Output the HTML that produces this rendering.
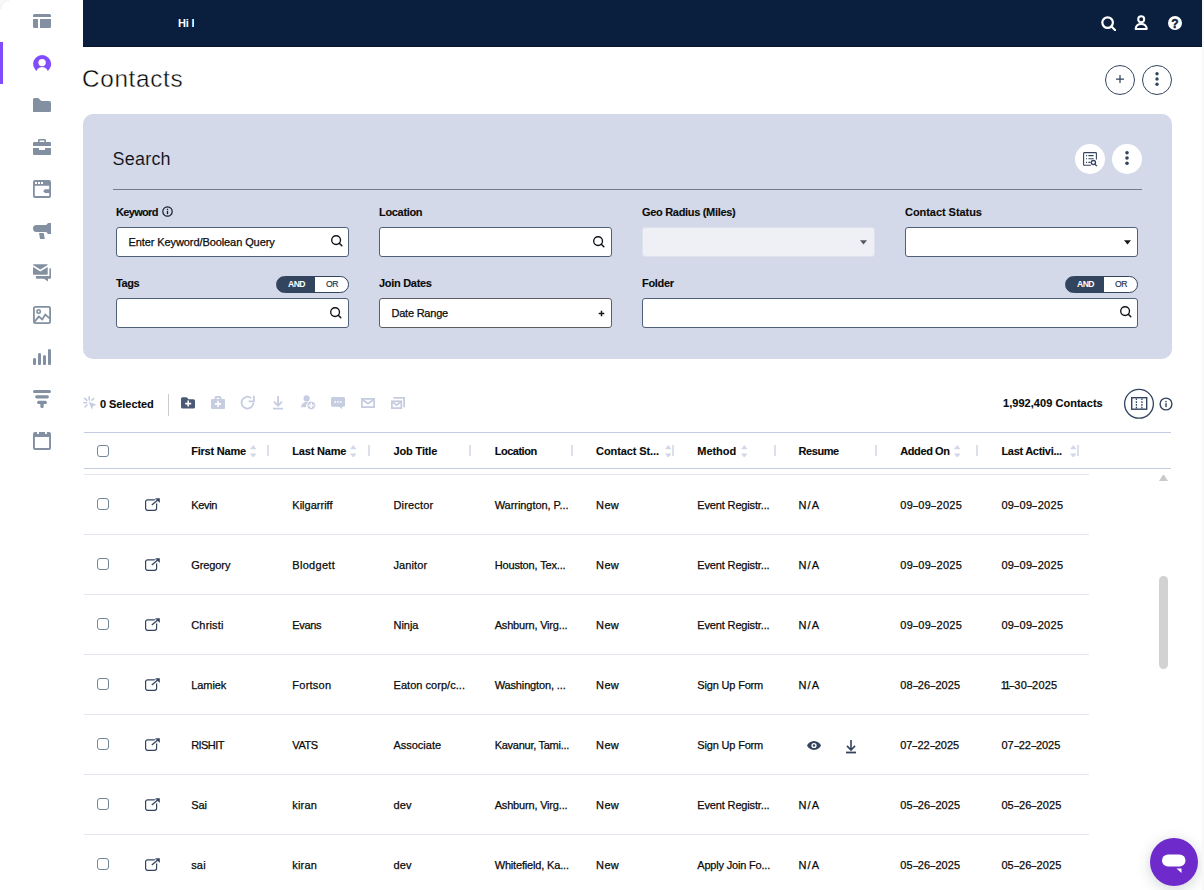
<!DOCTYPE html>
<html lang="en"><head><meta charset="utf-8"><title>Contacts</title>
<style>
html,body{margin:0;padding:0}
body{width:1204px;height:890px;overflow:hidden;background:#f8f8f8;font-family:"Liberation Sans",sans-serif;color:#0c0c0c;position:relative}
.ab{position:absolute}
#page{position:absolute;left:0;top:0;width:1202px;height:890px;background:#fff;border-top-left-radius:9px;overflow:hidden}
#topbar{position:absolute;left:83px;top:0;width:1119px;height:46px;background:#0a1e3d;border-bottom:1px solid #06142c;box-sizing:content-box}
.t{position:absolute;white-space:nowrap;line-height:14px;font-size:11px;color:#0b0b0b;-webkit-text-stroke:0.25px #0b0b0b}
.hy{display:inline-block;transform:scaleX(1.7)}
.b{font-weight:700;-webkit-text-stroke:0.12px}
.inp{position:absolute;box-sizing:border-box;height:30px;background:#fff;border:1px solid #4f6079;border-radius:3px}
.lbl{position:absolute;white-space:nowrap;line-height:14px;font-size:11px;font-weight:700;color:#0b0b0b;-webkit-text-stroke:0.12px #0b0b0b}
.tog{position:absolute;box-sizing:border-box;width:73px;height:17px;border:1px solid #33445f;border-radius:9px;background:linear-gradient(to right,#33445f 0,#33445f 39px,#fff 39px,#fff 100%);background-origin:border-box}
.tog span{position:absolute;top:0.4px;line-height:15px;font-size:8.6px;font-weight:700;letter-spacing:-0.55px}
.cb{position:absolute;box-sizing:border-box;width:12px;height:12px;border:1px solid #728599;border-radius:3px;background:#fff}
.hl{position:absolute;height:1px}
.sep{position:absolute;width:2px;height:11px;top:445px;background:#dce0ec}
.circ{position:absolute;box-sizing:border-box;width:30px;height:30px;border-radius:50%}
</style></head><body><div id="page">

<div class="ab" style="left:0;top:0;width:9px;height:9px;box-sizing:border-box;border-top-left-radius:9px;border-left:1px solid #ececec;border-top:1px solid #ececec"></div>
<div class="ab" style="left:0;top:42px;width:3px;height:42px;background:#814cff"></div>
<svg class="ab" style="left:33px;top:14px" width="18" height="14" viewBox="0 0 18 14" ><path fill="#8290a2" d="M1.5 0h15A1.5 1.5 0 0 1 18 1.5V3H0V1.5A1.5 1.5 0 0 1 1.5 0zM0 5h5v9H1.5A1.5 1.5 0 0 1 0 12.5zM7 5h11v7.5a1.5 1.5 0 0 1-1.5 1.5H7z"/></svg>
<svg class="ab" style="left:33px;top:54.9px" width="18.2" height="18" viewBox="0 0 18.2 18" ><defs><mask id="um"><rect width="18.2" height="18" fill="#000"/><circle cx="9.1" cy="9" r="9" fill="#fff"/><circle cx="9.1" cy="7.6" r="3.7" fill="#000"/><circle cx="9.1" cy="18.1" r="6.1" fill="#000"/><rect x="0" y="16.3" width="18.2" height="2" fill="#000"/></mask></defs><rect width="18.2" height="18" fill="#814cff" mask="url(#um)"/></svg>
<svg class="ab" style="left:33px;top:98px" width="18" height="14" viewBox="0 0 18 14" ><path fill="#8290a2" d="M0 14V1.5Q0 0 1.5 0H5.3L8.3 3H16Q18 3 18 5V12.5Q18 14 16.5 14z"/></svg>
<svg class="ab" style="left:33px;top:139px" width="18" height="16" viewBox="0 0 18 16" ><path fill="#8290a2" fill-rule="evenodd" d="M6.2 0h5.6a1.2 1.2 0 0 1 1.2 1.2V3h4a1 1 0 0 1 1 1v2.9H0V4a1 1 0 0 1 1-1h4V1.2A1.2 1.2 0 0 1 6.2 0zM6.6 1.6V3h4.8V1.6zM0 9h6v2h6V9h6v6a1 1 0 0 1-1 1H1a1 1 0 0 1-1-1z"/></svg>
<svg class="ab" style="left:33px;top:180px" width="18" height="18" viewBox="0 0 18 18" ><path fill="#8290a2" fill-rule="evenodd" d="M2 0h14a2 2 0 0 1 2 2v14a2 2 0 0 1-2 2H2a2 2 0 0 1-2-2V2a2 2 0 0 1 2-2zM1.8 5.8V16.1h14.4V13H12l-1.9-1.9L12 9.2h4.2V5.8zM2 2v2h2V2zm3 0v2h2V2zm3 0v2h2V2z"/></svg>
<svg class="ab" style="left:33px;top:223px" width="18" height="16" viewBox="0 0 18 16" ><path fill="#8290a2" d="M3.5 2H13.3L15 0h3v11h-3l-1.7-2H3.5a3.5 3.5 0 0 1 0-7zM6.1 10h4.6l1.2 6H7z"/></svg>
<svg class="ab" style="left:33px;top:264px" width="18" height="18" viewBox="0 0 18 18" ><path fill="#8290a2" d="M.6.2H14.1a.6.6 0 0 1 .6.6V1L7.35 5.6 0 1V.8A.6.6 0 0 1 .6.2zM0 2.9L7.35 7.5 14.7 2.9V10a.7.7 0 0 1-.7.7H.7A.7.7 0 0 1 0 10zM16.4 4.3H17a1 1 0 0 1 1 1v8.4a1 1 0 0 1-1 1h-2v2.8l-4-2.8H3.9a1 1 0 0 1-1-1V12h13.5z"/></svg>
<svg class="ab" style="left:33px;top:306px" width="18" height="18" viewBox="0 0 18 18" ><g fill="none" stroke="#8290a2"><rect x="0.9" y="0.9" width="16.2" height="16.2" rx="1.6" stroke-width="1.8"/><circle cx="5.6" cy="5.5" r="1.7" stroke-width="1.6"/><path d="M1.4 15.9L5.8 10.6 9.3 13.4 12.2 8.6 17 12.6" stroke-width="1.8" stroke-linejoin="miter"/></g></svg>
<svg class="ab" style="left:33px;top:349px" width="18" height="16.2" viewBox="0 0 18 16.2" ><g fill="#8290a2"><rect x="0" y="9" width="3" height="7.2" rx="1.5"/><rect x="5" y="4" width="3" height="12.2" rx="1.5"/><rect x="10" y="6" width="3" height="10.2" rx="1.5"/><rect x="15" y="0" width="3" height="16.2" rx="1.5"/></g></svg>
<svg class="ab" style="left:33px;top:390px" width="18" height="18" viewBox="0 0 18 18" ><g fill="#8290a2"><rect x="0" y="0" width="18" height="3.1" rx="1.5"/><rect x="2.1" y="5.2" width="13.8" height="3.2" rx="1.6"/><rect x="4.1" y="10.8" width="9.8" height="3.1" rx="1.5"/><rect x="7.35" y="11" width="3.3" height="6.9" rx="1.5"/></g></svg>
<svg class="ab" style="left:33px;top:432px" width="18" height="18" viewBox="0 0 18 18" ><path fill="#8290a2" fill-rule="evenodd" d="M2 0H4.1V2H6V0h6v2h1.9V0H16a2 2 0 0 1 2 2v14a2 2 0 0 1-2 2H2a2 2 0 0 1-2-2V2a2 2 0 0 1 2-2zM1.9 5v11.1h14.2V5z"/></svg>
<div id="topbar">
<div class="t b" style="left:95px;top:16px;width:16px;overflow:hidden;color:#fff;-webkit-text-stroke:0;font-size:11px;letter-spacing:-0.2px">Hi K</div>
</div>
<svg class="ab" style="left:1101px;top:16px" width="15" height="15" viewBox="0 0 15 15" ><circle cx="6.6" cy="6.6" r="5.3" fill="none" stroke="#fff" stroke-width="2.2"/><path d="M10.5 10.5l3.7 3.7" stroke="#fff" stroke-width="2.2" stroke-linecap="round"/></svg>
<svg class="ab" style="left:1134px;top:15px" width="14" height="15" viewBox="0 0 14 15" ><circle cx="7.2" cy="4.3" r="3" fill="none" stroke="#fff" stroke-width="2"/><path d="M1.6 13.9C2 10.4 4.4 9 7.2 9s5.2 1.4 5.6 4.9z" fill="none" stroke="#fff" stroke-width="2" stroke-linejoin="round"/></svg>
<div class="ab" style="left:1167.8px;top:16.3px;width:14px;height:14px;border-radius:50%;background:#fff"></div>
<div class="t b" style="left:1167.8px;top:16.8px;width:14px;text-align:center;line-height:14px;font-size:12px;color:#0a1e3d;-webkit-text-stroke:0.4px #0a1e3d">?</div>
<div class="t" style="left:82px;top:63.7px;font-size:24.3px;line-height:30px;color:#0a0a0a;-webkit-text-stroke:0.4px #fff;letter-spacing:0.67px">Contacts</div>
<div class="circ" style="left:1105px;top:65px;border:1px solid #33445f"></div>
<div class="circ" style="left:1142px;top:65px;border:1px solid #33445f"></div>
<svg class="ab" style="left:1114px;top:73.2px" width="12" height="12" viewBox="0 0 12 12" ><path d="M6 2v8M2 6h8" stroke="#33445f" stroke-width="1.25"/></svg>
<svg class="ab" style="left:1155px;top:70.9px" width="4" height="16" viewBox="0 0 4 16" ><g fill="#33445f"><circle cx="2" cy="2.7" r="1.7"/><circle cx="2" cy="8" r="1.7"/><circle cx="2" cy="13.3" r="1.7"/></g></svg>
<div class="ab" style="left:83px;top:114px;width:1089px;height:245px;background:#d3d9e8;border-radius:10px"></div>
<div class="t" style="left:112.5px;top:147px;font-size:18px;line-height:24px;color:#0c1014;-webkit-text-stroke:0.12px #d3d9e8;letter-spacing:0.22px">Search</div>
<div class="circ" style="left:1075px;top:144px;background:#fff"></div>
<div class="circ" style="left:1112px;top:144px;background:#fff"></div>
<svg class="ab" style="left:1125.3px;top:149.8px" width="4" height="16" viewBox="0 0 4 16" ><g fill="#33445f"><circle cx="2" cy="2.7" r="1.8"/><circle cx="2" cy="8" r="1.8"/><circle cx="2" cy="13.3" r="1.8"/></g></svg>
<svg class="ab" style="left:1083px;top:152px" width="15" height="15" viewBox="0 0 15 15" ><g fill="none" stroke="#33445f" stroke-width="1.1"><path d="M7.8 13.3H1.2a.6.6 0 0 1-.6-.6V1.2a.6.6 0 0 1 .6-.6h11.6a.6.6 0 0 1 .6.6V7.4"/><path d="M5.4 3.6h5.2M5.4 6.8h5.2M5.4 10.4h2"/><path d="M3 3.6h1.1M3 6.8h1.1M3 10.4h1.1"/><circle cx="10.4" cy="10.6" r="2.1" stroke-width="1.3"/><path d="M12 12.2l1.9 1.9" stroke-width="1.3"/></g></svg>
<div class="hl" style="left:113px;top:189px;width:1029px;background:#707b8c"></div>
<div class="lbl" style="left:116px;top:205px;letter-spacing:-0.68px">Keyword</div>
<svg class="ab" style="left:161.6px;top:205.8px" width="11" height="11" viewBox="0 0 11 11" ><circle cx="5.5" cy="5.5" r="4.7" fill="none" stroke="#141b26" stroke-width="1.2"/><rect x="4.85" y="4.9" width="1.3" height="3.3" fill="#141b26"/><rect x="4.85" y="2.8" width="1.3" height="1.3" fill="#141b26"/></svg>
<div class="inp" style="left:116px;top:227px;width:233px"></div>
<div class="t" style="left:128.5px;top:235px;letter-spacing:-0.09px">Enter Keyword/Boolean Query</div>
<svg class="ab" style="left:331px;top:235.2px" width="12.5" height="12.5" viewBox="0 0 12.5 12.5" ><circle cx="5.1" cy="5.1" r="4.4" fill="none" stroke="#0c1118" stroke-width="1.35"/><path d="M8.3 8.3l2.5 2.4" stroke="#0c1118" stroke-width="1.5" stroke-linecap="round"/></svg>
<div class="lbl" style="left:379px;top:205px;letter-spacing:-0.32px">Location</div>
<div class="inp" style="left:379px;top:227px;width:233px"></div>
<svg class="ab" style="left:592.7px;top:236.2px" width="12.5" height="12.5" viewBox="0 0 12.5 12.5" ><circle cx="5.1" cy="5.1" r="4.4" fill="none" stroke="#0c1118" stroke-width="1.35"/><path d="M8.3 8.3l2.5 2.4" stroke="#0c1118" stroke-width="1.5" stroke-linecap="round"/></svg>
<div class="lbl" style="left:642px;top:205px;letter-spacing:-0.31px">Geo Radius (Miles)</div>
<div class="inp" style="left:642px;top:227px;width:233px;background:#eef0f6;border-color:#dde1ec"></div>
<svg class="ab" style="left:860px;top:240px" width="7" height="5" viewBox="0 0 7 5" ><path d="M0 0.3h7L3.5 4.6z" fill="#55595f"/></svg>
<div class="lbl" style="left:905px;top:205px;letter-spacing:-0.05px">Contact Status</div>
<div class="inp" style="left:905px;top:227px;width:233px"></div>
<svg class="ab" style="left:1124px;top:240px" width="7" height="5" viewBox="0 0 7 5" ><path d="M0 0.3h7L3.5 4.6z" fill="#15191f"/></svg>
<div class="lbl" style="left:116px;top:276px;letter-spacing:-0.39px">Tags</div>
<div class="tog" style="left:276px;top:276px"><span style="left:11px;color:#fff">AND</span><span style="left:49px;color:#2a3850;font-weight:400;font-size:8.6px;letter-spacing:-0.35px;-webkit-text-stroke:0.2px #2a3850">OR</span></div>
<div class="inp" style="left:116px;top:298px;width:233px"></div>
<svg class="ab" style="left:329.7px;top:307.2px" width="12.5" height="12.5" viewBox="0 0 12.5 12.5" ><circle cx="5.1" cy="5.1" r="4.4" fill="none" stroke="#0c1118" stroke-width="1.35"/><path d="M8.3 8.3l2.5 2.4" stroke="#0c1118" stroke-width="1.5" stroke-linecap="round"/></svg>
<div class="lbl" style="left:379px;top:276px;letter-spacing:-0.3px">Join Dates</div>
<div class="inp" style="left:379px;top:298px;width:233px;border-color:#5e5e5e"></div>
<div class="t" style="left:391.5px;top:306px;letter-spacing:-0.23px">Date Range</div>
<svg class="ab" style="left:598px;top:310px" width="7" height="7" viewBox="0 0 7 7" ><path d="M3.5 0.7v5.6M0.7 3.5h5.6" stroke="#15191f" stroke-width="1.5"/></svg>
<div class="lbl" style="left:642px;top:276px;letter-spacing:-0.3px">Folder</div>
<div class="tog" style="left:1065px;top:276px"><span style="left:11px;color:#fff">AND</span><span style="left:49px;color:#2a3850;font-weight:400;font-size:8.6px;letter-spacing:-0.35px;-webkit-text-stroke:0.2px #2a3850">OR</span></div>
<div class="inp" style="left:642px;top:298px;width:496px"></div>
<svg class="ab" style="left:1119.9px;top:306.2px" width="12.5" height="12.5" viewBox="0 0 12.5 12.5" ><circle cx="5.1" cy="5.1" r="4.4" fill="none" stroke="#0c1118" stroke-width="1.35"/><path d="M8.3 8.3l2.5 2.4" stroke="#0c1118" stroke-width="1.5" stroke-linecap="round"/></svg>
<svg class="ab" style="left:83px;top:396px" width="14" height="14" viewBox="0 0 14 14" ><g stroke="#c6cde1" stroke-width="1.6" stroke-linecap="round" fill="none"><path d="M6.2 0.9v3M1.8 2.4l2 2M0.9 6.8h2.8M2 11l1.9-1.9M10.6 2.4l-1.8 1.9"/></g><path d="M5.6 5.8l8 2.9-3.4 1.4-1.4 3.5z" fill="#c6cde1"/></svg>
<div class="t b" style="left:100px;top:397px;letter-spacing:-0.07px">0 Selected</div>
<div class="ab" style="left:168px;top:394px;width:1px;height:22px;background:#c9cbd0"></div>
<svg class="ab" style="left:181px;top:397px" width="14" height="12" viewBox="0 0 14 12" ><path fill="#4b5974" d="M1.5 0.2h3.6c.5 0 .9.2 1.2.6l1.1 1.5h5.1a1.5 1.5 0 0 1 1.5 1.5v6.2a1.5 1.5 0 0 1-1.5 1.5h-11A1.5 1.5 0 0 1 0 10V1.7A1.5 1.5 0 0 1 1.5.2z"/><path d="M7.2 3.6v6M4.2 6.6h6" stroke="#fff" stroke-width="1.6"/></svg>
<svg class="ab" style="left:211px;top:396px" width="14" height="13" viewBox="0 0 14 13" ><path fill="#c6cde1" d="M5.2 0h3.6c.9 0 1.6.7 1.6 1.6V3h2.6a1 1 0 0 1 1 1v8a1 1 0 0 1-1 1H1a1 1 0 0 1-1-1V4a1 1 0 0 1 1-1h2.6V1.6C3.6.7 4.3 0 5.2 0zm.5 1.7V3h2.6V1.7z"/><path d="M7 4.8v6.2M3.9 7.9h6.2" stroke="#fff" stroke-width="1.6"/></svg>
<svg class="ab" style="left:240.4px;top:395.4px" width="15" height="15" viewBox="0 0 15 15" ><path d="M13.4 7.6A5.9 5.9 0 1 1 11.3 3.1" fill="none" stroke="#c6cde1" stroke-width="1.8"/><path d="M13.9 0.8v5.5H8.6" fill="none" stroke="#c6cde1" stroke-width="1.8"/></svg>
<svg class="ab" style="left:273.2px;top:396.2px" width="10" height="14" viewBox="0 0 10 14" ><path d="M5 0v9.6M1 5.7l4 4 4-4M0 12.6h10" fill="none" stroke="#c6cde1" stroke-width="1.8"/></svg>
<svg class="ab" style="left:300.6px;top:395.3px" width="15" height="15" viewBox="0 0 15 15" ><circle cx="5.6" cy="3.4" r="3.1" fill="#c6cde1"/><path d="M0 12.3c.3-3.4 2.4-5.4 5.6-5.4.8 0 1.5.1 2.1.3A5.4 5.4 0 0 0 5 12.3z" fill="#c6cde1"/><circle cx="10.2" cy="10.4" r="4.3" fill="#c6cde1" stroke="#fff" stroke-width="0.9"/><path d="M10.2 7.7v5.4M7.5 10.4h5.4" stroke="#fff" stroke-width="1.5"/></svg>
<svg class="ab" style="left:331px;top:397px" width="14" height="13" viewBox="0 0 14 13" ><path fill="#c6cde1" d="M1.5 0h11A1.5 1.5 0 0 1 14 1.5v6.7a1.5 1.5 0 0 1-1.5 1.5H11v2.3L8.2 9.7H1.5A1.5 1.5 0 0 1 0 8.2V1.5A1.5 1.5 0 0 1 1.5 0z"/><g fill="#fff"><rect x="3.4" y="4.2" width="1.6" height="1.6"/><rect x="6.2" y="4.2" width="1.6" height="1.6"/><rect x="9" y="4.2" width="1.6" height="1.6"/></g></svg>
<svg class="ab" style="left:361px;top:398px" width="14" height="10" viewBox="0 0 14 10" ><rect x="0.9" y="0.9" width="12.2" height="8.2" fill="none" stroke="#c6cde1" stroke-width="1.8"/><path d="M1.2 1.4l5.8 4.2 5.8-4.2" fill="none" stroke="#c6cde1" stroke-width="1.8"/></svg>
<svg class="ab" style="left:391px;top:397px" width="14" height="12" viewBox="0 0 14 12" ><path d="M2.4 0.9h10.7v9.4" fill="none" stroke="#c6cde1" stroke-width="1.8"/><rect x="0.9" y="4.3" width="9.4" height="6.8" fill="none" stroke="#c6cde1" stroke-width="1.8"/><path d="M1.2 4.8l4.4 3.3 4.4-3.3" fill="none" stroke="#c6cde1" stroke-width="1.7"/></svg>
<div class="t b" style="left:1003px;top:396px;letter-spacing:0.04px">1,992,409 Contacts</div>
<svg class="ab" style="left:1123px;top:388px" width="32" height="32" viewBox="0 0 32 32" ><circle cx="16" cy="15.8" r="14.4" fill="none" stroke="#33445f" stroke-width="1.3"/></svg>
<svg class="ab" style="left:1130.8px;top:397px" width="17" height="13" viewBox="0 0 17 13" ><rect x="0.7" y="0.7" width="15" height="11.5" fill="none" stroke="#33445f" stroke-width="1.4"/><path d="M5.4 1.4v10M10.9 1.4v10" stroke="#33445f" stroke-width="1.3" stroke-dasharray="1.7 1.1"/></svg>
<svg class="ab" style="left:1158.5px;top:397px" width="14" height="14" viewBox="0 0 14 14" ><circle cx="7" cy="7" r="5.9" fill="none" stroke="#33445f" stroke-width="1.4"/><rect x="6.3" y="6.2" width="1.4" height="3.9" fill="#33445f"/><rect x="6.3" y="3.9" width="1.4" height="1.4" fill="#33445f"/></svg>
<div class="hl" style="left:84px;top:432px;width:1087px;background:#c4cbe0"></div>
<div class="hl" style="left:84px;top:468px;width:1087px;background:#c4cbe0"></div>
<div class="cb" style="left:97px;top:445px"></div>
<div class="t b" style="left:191.2px;top:444px;letter-spacing:-0.21px">First Name</div>
<svg class="ab" style="left:250px;top:444.7px" width="6.5" height="12.8" viewBox="0 0 6.5 12.8" ><path d="M3.25 0L6.5 4.2H0zM3.25 12.8L0 8.6h6.5z" fill="#d3d8e8"/></svg>
<div class="sep" style="left:267px"></div>
<div class="t b" style="left:292.3px;top:444px;letter-spacing:-0.18px">Last Name</div>
<svg class="ab" style="left:349.5px;top:444.7px" width="6.5" height="12.8" viewBox="0 0 6.5 12.8" ><path d="M3.25 0L6.5 4.2H0zM3.25 12.8L0 8.6h6.5z" fill="#d3d8e8"/></svg>
<div class="sep" style="left:368.2px"></div>
<div class="t b" style="left:393.5px;top:444px;letter-spacing:-0.15px">Job Title</div>
<div class="sep" style="left:469.4px"></div>
<div class="t b" style="left:494.7px;top:444px;letter-spacing:-0.48px">Location</div>
<div class="sep" style="left:571.2px"></div>
<div class="t b" style="left:596.1px;top:444px;letter-spacing:-0.11px">Contact St...</div>
<svg class="ab" style="left:664.5px;top:444.7px" width="6.5" height="12.8" viewBox="0 0 6.5 12.8" ><path d="M3.25 0L6.5 4.2H0zM3.25 12.8L0 8.6h6.5z" fill="#d3d8e8"/></svg>
<div class="sep" style="left:672.4px"></div>
<div class="t b" style="left:697.3px;top:444px;letter-spacing:-0.06px">Method</div>
<svg class="ab" style="left:740.5px;top:444.7px" width="6.5" height="12.8" viewBox="0 0 6.5 12.8" ><path d="M3.25 0L6.5 4.2H0zM3.25 12.8L0 8.6h6.5z" fill="#d3d8e8"/></svg>
<div class="sep" style="left:773.6px"></div>
<div class="t b" style="left:798.6px;top:444px;letter-spacing:-0.46px">Resume</div>
<div class="sep" style="left:874.6px"></div>
<div class="t b" style="left:900.2px;top:444px;letter-spacing:-0.39px">Added On</div>
<svg class="ab" style="left:953.5px;top:444.7px" width="6.5" height="12.8" viewBox="0 0 6.5 12.8" ><path d="M3.25 0L6.5 4.2H0zM3.25 12.8L0 8.6h6.5z" fill="#d3d8e8"/></svg>
<div class="sep" style="left:976px"></div>
<div class="t b" style="left:1001.4px;top:444px;letter-spacing:-0.29px">Last Activi...</div>
<svg class="ab" style="left:1069.5px;top:444.7px" width="6.5" height="12.8" viewBox="0 0 6.5 12.8" ><path d="M3.25 0L6.5 4.2H0zM3.25 12.8L0 8.6h6.5z" fill="#d3d8e8"/></svg>
<div class="sep" style="left:1077.2px"></div>
<div class="hl" style="left:84px;top:474px;width:1005px;background:#e3e6f0"></div>
<div class="hl" style="left:84px;top:534px;width:1005px;background:#e3e6f0"></div>
<div class="cb" style="left:97px;top:498px"></div>
<svg class="ab" style="left:145px;top:498px" width="16" height="13" viewBox="0 0 16 13" ><rect x="0.6" y="1.8" width="11" height="10.5" rx="2" fill="none" stroke="#33445f" stroke-width="1.2"/><path d="M6 8L14.5 0.5" stroke="#fff" stroke-width="3.6"/><path d="M6.8 7L13 1.8" stroke="#33445f" stroke-width="1.4"/><path d="M10.2 0.3h4.6v4.6z" fill="#33445f"/></svg>
<div class="t" style="left:191.2px;top:498px;letter-spacing:-0.31px">Kevin</div>
<div class="t" style="left:292.3px;top:498px;letter-spacing:0.01px">Kilgarriff</div>
<div class="t" style="left:393.5px;top:498px;letter-spacing:0.17px">Director</div>
<div class="t" style="left:494.7px;top:498px;letter-spacing:-0.05px">Warrington, P...</div>
<div class="t" style="left:596.1px;top:498px;letter-spacing:0.34px">New</div>
<div class="t" style="left:697.3px;top:498px;letter-spacing:-0.15px">Event Registr...</div>
<div class="t" style="left:798.6px;top:498px;letter-spacing:1.03px">N/A</div>
<div class="t" style="left:900.2px;top:498px;letter-spacing:0.34px">09<span class="hy" style="margin:0 0.36px 0 0.84px">-</span>09<span class="hy" style="margin:0 0.36px 0 0.84px">-</span>2025</div>
<div class="t" style="left:1001.4px;top:498px;letter-spacing:0.34px">09<span class="hy" style="margin:0 0.36px 0 0.84px">-</span>09<span class="hy" style="margin:0 0.36px 0 0.84px">-</span>2025</div>
<div class="hl" style="left:84px;top:594px;width:1005px;background:#e3e6f0"></div>
<div class="cb" style="left:97px;top:558px"></div>
<svg class="ab" style="left:145px;top:558px" width="16" height="13" viewBox="0 0 16 13" ><rect x="0.6" y="1.8" width="11" height="10.5" rx="2" fill="none" stroke="#33445f" stroke-width="1.2"/><path d="M6 8L14.5 0.5" stroke="#fff" stroke-width="3.6"/><path d="M6.8 7L13 1.8" stroke="#33445f" stroke-width="1.4"/><path d="M10.2 0.3h4.6v4.6z" fill="#33445f"/></svg>
<div class="t" style="left:191.2px;top:558px;letter-spacing:-0.09px">Gregory</div>
<div class="t" style="left:292.3px;top:558px;letter-spacing:0.3px">Blodgett</div>
<div class="t" style="left:393.5px;top:558px;letter-spacing:0.11px">Janitor</div>
<div class="t" style="left:494.7px;top:558px;letter-spacing:-0.16px">Houston, Tex...</div>
<div class="t" style="left:596.1px;top:558px;letter-spacing:0.34px">New</div>
<div class="t" style="left:697.3px;top:558px;letter-spacing:-0.15px">Event Registr...</div>
<div class="t" style="left:798.6px;top:558px;letter-spacing:1.03px">N/A</div>
<div class="t" style="left:900.2px;top:558px;letter-spacing:0.34px">09<span class="hy" style="margin:0 0.36px 0 0.84px">-</span>09<span class="hy" style="margin:0 0.36px 0 0.84px">-</span>2025</div>
<div class="t" style="left:1001.4px;top:558px;letter-spacing:0.34px">09<span class="hy" style="margin:0 0.36px 0 0.84px">-</span>09<span class="hy" style="margin:0 0.36px 0 0.84px">-</span>2025</div>
<div class="hl" style="left:84px;top:654px;width:1005px;background:#e3e6f0"></div>
<div class="cb" style="left:97px;top:618px"></div>
<svg class="ab" style="left:145px;top:618px" width="16" height="13" viewBox="0 0 16 13" ><rect x="0.6" y="1.8" width="11" height="10.5" rx="2" fill="none" stroke="#33445f" stroke-width="1.2"/><path d="M6 8L14.5 0.5" stroke="#fff" stroke-width="3.6"/><path d="M6.8 7L13 1.8" stroke="#33445f" stroke-width="1.4"/><path d="M10.2 0.3h4.6v4.6z" fill="#33445f"/></svg>
<div class="t" style="left:191.2px;top:618px;letter-spacing:0.19px">Christi</div>
<div class="t" style="left:292.3px;top:618px;letter-spacing:-0.37px">Evans</div>
<div class="t" style="left:393.5px;top:618px;letter-spacing:-0.02px">Ninja</div>
<div class="t" style="left:494.7px;top:618px;letter-spacing:-0.18px">Ashburn, Virg...</div>
<div class="t" style="left:596.1px;top:618px;letter-spacing:0.34px">New</div>
<div class="t" style="left:697.3px;top:618px;letter-spacing:-0.15px">Event Registr...</div>
<div class="t" style="left:798.6px;top:618px;letter-spacing:1.03px">N/A</div>
<div class="t" style="left:900.2px;top:618px;letter-spacing:0.34px">09<span class="hy" style="margin:0 0.36px 0 0.84px">-</span>09<span class="hy" style="margin:0 0.36px 0 0.84px">-</span>2025</div>
<div class="t" style="left:1001.4px;top:618px;letter-spacing:0.34px">09<span class="hy" style="margin:0 0.36px 0 0.84px">-</span>09<span class="hy" style="margin:0 0.36px 0 0.84px">-</span>2025</div>
<div class="hl" style="left:84px;top:714px;width:1005px;background:#e3e6f0"></div>
<div class="cb" style="left:97px;top:678px"></div>
<svg class="ab" style="left:145px;top:678px" width="16" height="13" viewBox="0 0 16 13" ><rect x="0.6" y="1.8" width="11" height="10.5" rx="2" fill="none" stroke="#33445f" stroke-width="1.2"/><path d="M6 8L14.5 0.5" stroke="#fff" stroke-width="3.6"/><path d="M6.8 7L13 1.8" stroke="#33445f" stroke-width="1.4"/><path d="M10.2 0.3h4.6v4.6z" fill="#33445f"/></svg>
<div class="t" style="left:191.2px;top:678px;letter-spacing:-0.07px">Lamiek</div>
<div class="t" style="left:292.3px;top:678px;letter-spacing:0.25px">Fortson</div>
<div class="t" style="left:393.5px;top:678px;letter-spacing:0.04px">Eaton corp/c...</div>
<div class="t" style="left:494.7px;top:678px;letter-spacing:-0.14px">Washington, ...</div>
<div class="t" style="left:596.1px;top:678px;letter-spacing:0.34px">New</div>
<div class="t" style="left:697.3px;top:678px;letter-spacing:-0.17px">Sign Up Form</div>
<div class="t" style="left:798.6px;top:678px;letter-spacing:1.03px">N/A</div>
<div class="t" style="left:900.2px;top:678px;letter-spacing:0.08px">08<span class="hy" style="margin:0 0.44px 0 1.02px">-</span>26<span class="hy" style="margin:0 0.44px 0 1.02px">-</span>2025</div>
<div class="t" style="left:1001.4px;top:678px;letter-spacing:0.15px"><span style="letter-spacing:-2.7px;margin-left:-0.7px">1</span><span style="letter-spacing:-1.1px">1</span><span class="hy" style="margin:0 0.42px 0 0.97px">-</span>30<span class="hy" style="margin:0 0.42px 0 0.97px">-</span>2025</div>
<div class="hl" style="left:84px;top:774px;width:1005px;background:#e3e6f0"></div>
<div class="cb" style="left:97px;top:738px"></div>
<svg class="ab" style="left:145px;top:738px" width="16" height="13" viewBox="0 0 16 13" ><rect x="0.6" y="1.8" width="11" height="10.5" rx="2" fill="none" stroke="#33445f" stroke-width="1.2"/><path d="M6 8L14.5 0.5" stroke="#fff" stroke-width="3.6"/><path d="M6.8 7L13 1.8" stroke="#33445f" stroke-width="1.4"/><path d="M10.2 0.3h4.6v4.6z" fill="#33445f"/></svg>
<div class="t" style="left:191.2px;top:738px;letter-spacing:-0.55px">RISHIT</div>
<div class="t" style="left:292.3px;top:738px;letter-spacing:-0.4px">VATS</div>
<div class="t" style="left:393.5px;top:738px;letter-spacing:-0.02px">Associate</div>
<div class="t" style="left:494.7px;top:738px;letter-spacing:-0.27px">Kavanur, Tami...</div>
<div class="t" style="left:596.1px;top:738px;letter-spacing:0.34px">New</div>
<div class="t" style="left:697.3px;top:738px;letter-spacing:-0.17px">Sign Up Form</div>
<div class="t" style="left:900.2px;top:738px;letter-spacing:-0.07px">07<span class="hy" style="margin:0 0.48px 0 1.13px">-</span>22<span class="hy" style="margin:0 0.48px 0 1.13px">-</span>2025</div>
<div class="t" style="left:1001.4px;top:738px;letter-spacing:-0.07px">07<span class="hy" style="margin:0 0.48px 0 1.13px">-</span>22<span class="hy" style="margin:0 0.48px 0 1.13px">-</span>2025</div>
<svg class="ab" style="left:806.8px;top:741px" width="14" height="9" viewBox="0 0 14 9" ><path d="M7 0C3.5 0 1.1 2.3 0 4.5c1.1 2.2 3.5 4.5 7 4.5s5.9-2.3 7-4.5C12.9 2.3 10.5 0 7 0z" fill="#33445f"/><circle cx="7" cy="4.5" r="2.6" fill="#fff"/><circle cx="7" cy="4.5" r="1.2" fill="#33445f"/></svg>
<svg class="ab" style="left:846.3px;top:739.5px" width="10" height="14" viewBox="0 0 10 14" ><path d="M5 0v10M1 5.9l4 4.2 4-4.2" fill="none" stroke="#33445f" stroke-width="1.6"/><rect x="0" y="11.6" width="10" height="1.8" fill="#33445f"/></svg>
<div class="hl" style="left:84px;top:834px;width:1005px;background:#e3e6f0"></div>
<div class="cb" style="left:97px;top:798px"></div>
<svg class="ab" style="left:145px;top:798px" width="16" height="13" viewBox="0 0 16 13" ><rect x="0.6" y="1.8" width="11" height="10.5" rx="2" fill="none" stroke="#33445f" stroke-width="1.2"/><path d="M6 8L14.5 0.5" stroke="#fff" stroke-width="3.6"/><path d="M6.8 7L13 1.8" stroke="#33445f" stroke-width="1.4"/><path d="M10.2 0.3h4.6v4.6z" fill="#33445f"/></svg>
<div class="t" style="left:191.2px;top:798px;letter-spacing:-0.1px">Sai</div>
<div class="t" style="left:292.3px;top:798px;letter-spacing:0.16px">kiran</div>
<div class="t" style="left:393.5px;top:798px;letter-spacing:0.13px">dev</div>
<div class="t" style="left:494.7px;top:798px;letter-spacing:-0.18px">Ashburn, Virg...</div>
<div class="t" style="left:596.1px;top:798px;letter-spacing:0.34px">New</div>
<div class="t" style="left:697.3px;top:798px;letter-spacing:-0.15px">Event Registr...</div>
<div class="t" style="left:798.6px;top:798px;letter-spacing:1.03px">N/A</div>
<div class="t" style="left:900.2px;top:798px;letter-spacing:0.08px">05<span class="hy" style="margin:0 0.44px 0 1.02px">-</span>26<span class="hy" style="margin:0 0.44px 0 1.02px">-</span>2025</div>
<div class="t" style="left:1001.4px;top:798px;letter-spacing:0.08px">05<span class="hy" style="margin:0 0.44px 0 1.02px">-</span>26<span class="hy" style="margin:0 0.44px 0 1.02px">-</span>2025</div>
<div class="hl" style="left:84px;top:894px;width:1005px;background:#e3e6f0"></div>
<div class="cb" style="left:97px;top:858px"></div>
<svg class="ab" style="left:145px;top:858px" width="16" height="13" viewBox="0 0 16 13" ><rect x="0.6" y="1.8" width="11" height="10.5" rx="2" fill="none" stroke="#33445f" stroke-width="1.2"/><path d="M6 8L14.5 0.5" stroke="#fff" stroke-width="3.6"/><path d="M6.8 7L13 1.8" stroke="#33445f" stroke-width="1.4"/><path d="M10.2 0.3h4.6v4.6z" fill="#33445f"/></svg>
<div class="t" style="left:191.2px;top:858px;letter-spacing:0.16px">sai</div>
<div class="t" style="left:292.3px;top:858px;letter-spacing:0.16px">kiran</div>
<div class="t" style="left:393.5px;top:858px;letter-spacing:0.13px">dev</div>
<div class="t" style="left:494.7px;top:858px;letter-spacing:-0.17px">Whitefield, Ka...</div>
<div class="t" style="left:596.1px;top:858px;letter-spacing:0.34px">New</div>
<div class="t" style="left:697.3px;top:858px;letter-spacing:-0.19px">Apply Join Fo...</div>
<div class="t" style="left:798.6px;top:858px;letter-spacing:1.03px">N/A</div>
<div class="t" style="left:900.2px;top:858px;letter-spacing:0.08px">05<span class="hy" style="margin:0 0.44px 0 1.02px">-</span>26<span class="hy" style="margin:0 0.44px 0 1.02px">-</span>2025</div>
<div class="t" style="left:1001.4px;top:858px;letter-spacing:0.08px">05<span class="hy" style="margin:0 0.44px 0 1.02px">-</span>26<span class="hy" style="margin:0 0.44px 0 1.02px">-</span>2025</div>
<svg class="ab" style="left:1159px;top:475px" width="9" height="6" viewBox="0 0 9 6" ><path d="M4.5 -1L9 6H0z" fill="#c9c9c9"/></svg>
<div class="ab" style="left:1159px;top:576px;width:9px;height:93px;border-radius:4.5px;background:#d2d2d2"></div>
<div class="ab" style="left:1150px;top:838px;width:48px;height:48px;border-radius:50%;background:#6f2acb;box-shadow:0 3px 14px rgba(40,60,70,.22)"></div>
<svg class="ab" style="left:1162px;top:854px" width="24" height="20" viewBox="0 0 24 20" ><rect x="0" y="0.5" width="23.5" height="12" rx="6" fill="#fff"/><path d="M14.5 14.5h5v4.5z" fill="#fff"/></svg>
</div></body></html>
